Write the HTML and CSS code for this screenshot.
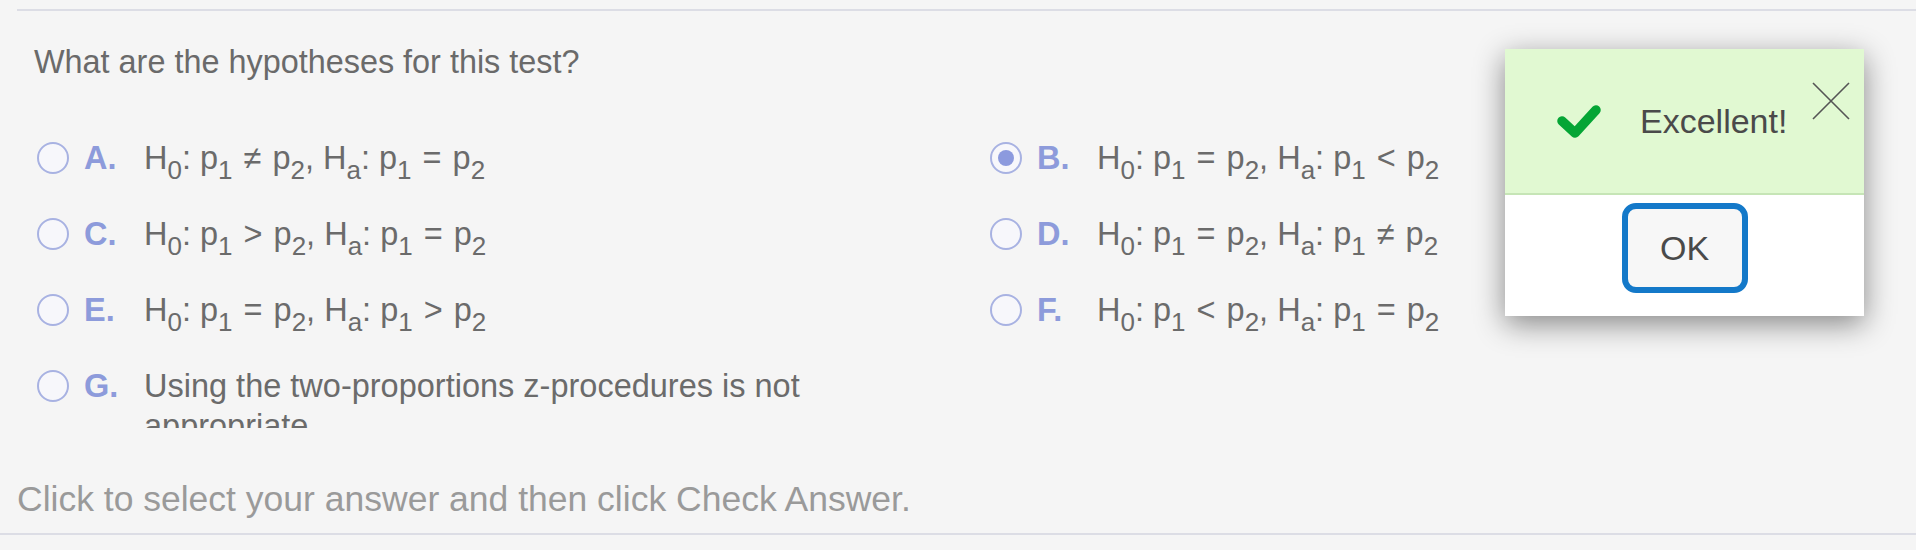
FILE: index.html
```html
<!DOCTYPE html>
<html>
<head>
<meta charset="utf-8">
<link rel="stylesheet" href="styles.css">
</head>
<body>
<div class="page">
  <div class="rule-top"></div>
  <div class="question">What are the hypotheses for this test?</div>
  <div class="options">
    <div class="opt"><span class="radio"></span><span class="letter">A.</span><span class="txt">H<span class="sub">0</span>: p<span class="sub">1</span><span class="op">≠</span>p<span class="sub">2</span>, H<span class="sub">a</span>: p<span class="sub">1</span><span class="op">=</span>p<span class="sub">2</span></span></div>
    <div class="opt"><span class="radio checked"></span><span class="letter">B.</span><span class="txt">H<span class="sub">0</span>: p<span class="sub">1</span><span class="op">=</span>p<span class="sub">2</span>, H<span class="sub">a</span>: p<span class="sub">1</span><span class="op">&lt;</span>p<span class="sub">2</span></span></div>
    <div class="opt"><span class="radio"></span><span class="letter">C.</span><span class="txt">H<span class="sub">0</span>: p<span class="sub">1</span><span class="op">&gt;</span>p<span class="sub">2</span>, H<span class="sub">a</span>: p<span class="sub">1</span><span class="op">=</span>p<span class="sub">2</span></span></div>
    <div class="opt"><span class="radio"></span><span class="letter">D.</span><span class="txt">H<span class="sub">0</span>: p<span class="sub">1</span><span class="op">=</span>p<span class="sub">2</span>, H<span class="sub">a</span>: p<span class="sub">1</span><span class="op">≠</span>p<span class="sub">2</span></span></div>
    <div class="opt"><span class="radio"></span><span class="letter">E.</span><span class="txt">H<span class="sub">0</span>: p<span class="sub">1</span><span class="op">=</span>p<span class="sub">2</span>, H<span class="sub">a</span>: p<span class="sub">1</span><span class="op">&gt;</span>p<span class="sub">2</span></span></div>
    <div class="opt"><span class="radio"></span><span class="letter">F.</span><span class="txt">H<span class="sub">0</span>: p<span class="sub">1</span><span class="op">&lt;</span>p<span class="sub">2</span>, H<span class="sub">a</span>: p<span class="sub">1</span><span class="op">=</span>p<span class="sub">2</span></span></div>
    <div class="opt"><span class="radio"></span><span class="letter">G.</span><span class="txt wrap">Using the two-proportions z-procedures is not appropriate</span></div>
  </div>
  <div class="footer">Click to select your answer and then click Check Answer.</div>
  <div class="rule-bottom"></div>

  <div class="popup">
    <div class="popup-head">
      <svg class="check" viewBox="0 0 46 36" width="46" height="36"><polyline points="6,18 19,30 40,7" fill="none" stroke="#05a535" stroke-width="9.5" stroke-linecap="round" stroke-linejoin="round"/></svg>
      <span class="msg">Excellent!</span>
      <svg class="close" viewBox="0 0 38 38" width="38" height="38"><path d="M1 1 L37 37 M37 1 L1 37" stroke="#555" stroke-width="1.6" fill="none"/></svg>
    </div>
    <div class="popup-body">
      <button class="ok">OK</button>
    </div>
  </div>
</div>
</body>
</html>
```
FILE: styles.css
```css
html, body {
  margin: 0;
  padding: 0;
  background: #f5f5f5;
}
.page {
  position: relative;
  width: 1916px;
  height: 550px;
  overflow: hidden;
  font-family: "Liberation Sans", Arial, sans-serif;
  color: #6b6b6b;
}
.rule-top {
  margin-top: 9px;
  margin-left: 17px;
  height: 2px;
  background: #dcdde5;
}
.question {
  margin-top: 31px;
  padding-left: 34px;
  font-size: 32.4px;
  line-height: 40px;
  color: #6a6a6a;
}
.options {
  margin-top: 38px;
  padding-left: 37px;
  height: 308px;
  overflow: hidden;
  display: grid;
  grid-template-columns: 953px 1fr;
  grid-auto-rows: 76px;
}
.opt {
  display: flex;
  align-items: flex-start;
  padding-top: 18px;
  font-size: 32.5px;
  line-height: 40px;
}
.radio {
  flex: none;
  box-sizing: border-box;
  width: 32px;
  height: 32px;
  margin-top: 4px;
  border: 2px solid #a8b2e2;
  border-radius: 50%;
  background: #f7f7fb;
  display: flex;
  align-items: center;
  justify-content: center;
}
.radio.checked::after {
  content: "";
  width: 16px;
  height: 16px;
  border-radius: 50%;
  background: #8c9ade;
}
.letter {
  flex: none;
  width: 60px;
  margin-left: 15px;
  font-weight: bold;
  color: #8d9bdb;
}
.txt {
  white-space: nowrap;
  color: #6b6b6b;
}
.txt.wrap {
  white-space: normal;
  width: 740px;
}
.sub {
  font-size: 26px;
  line-height: 1;
  vertical-align: -10px;
}
.op {
  margin: 0 11px;
}
.footer {
  margin-top: 51px;
  padding-left: 17px;
  font-size: 35.5px;
  line-height: 40px;
  color: #9a9a9a;
}
.rule-bottom {
  margin-top: 14px;
  height: 2px;
  background: #dcdde5;
}
.popup {
  position: absolute;
  left: 1505px;
  top: 49px;
  width: 359px;
  height: 267px;
  background: #fff;
  box-shadow: 0 8px 28px rgba(0, 0, 0, 0.45);
  display: flex;
  flex-direction: column;
}
.popup-head {
  position: relative;
  height: 144px;
  background: #e1f9d2;
  border-bottom: 2px solid #c6e5b6;
  display: flex;
  align-items: center;
  padding-left: 51px;
}
.check {
  flex: none;
}
.msg {
  margin-left: 38px;
  font-size: 34px;
  color: #4a4a4a;
}
.close {
  position: absolute;
  right: 14px;
  top: 33px;
}
.popup-body {
  flex: 1;
  display: flex;
  justify-content: center;
  padding-top: 8px;
}
.ok {
  box-sizing: border-box;
  width: 126px;
  height: 90px;
  border: 6px solid #1479c9;
  border-radius: 14px;
  background: #f7f7f7;
  font-family: "Liberation Sans", Arial, sans-serif;
  font-size: 34px;
  color: #4a4a4a;
  padding: 0;
}
```
